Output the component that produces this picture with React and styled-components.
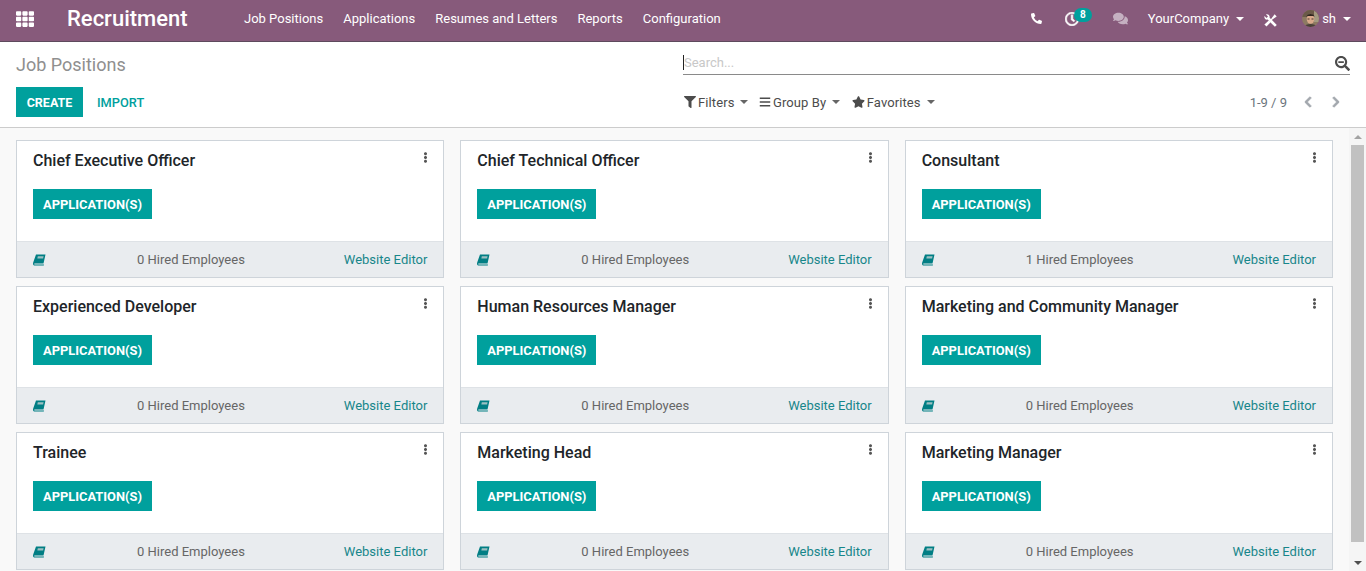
import React from 'react';
import styled, { createGlobalStyle } from 'styled-components';
import { FaTh, FaPhoneAlt, FaRegClock, FaComments, FaFilter, FaBars, FaStar, FaSearchMinus, FaChevronLeft, FaChevronRight, FaEllipsisV } from 'react-icons/fa';

const GlobalStyle = createGlobalStyle`
  html, body {
    margin: 0;
    height: 100%;
    overflow: hidden;
    font-family: Roboto, "Noto Sans", sans-serif;
    font-size: 13px;
    color: #212529;
  }
`;

const Page = styled.div`
  display: flex;
  flex-direction: column;
  height: 571px;
  background: #f9f9f9;
`;

const Navbar = styled.header`
  display: flex;
  align-items: center;
  height: 41px;
  box-sizing: content-box;
  flex-shrink: 0;
  background: #875a7b;
  border-bottom: 1px solid #5e4a5d;
  color: #fff;
`;

const NavInner = styled.div`
  display: flex;
  align-items: center;
  flex: 1;
  height: 37px;
  margin-bottom: 4px;
`;

const AppsIcon = styled(FaTh)`
  width: 18px;
  height: 18px;
  margin-left: 16px;
`;

const Brand = styled.span`
  margin-left: 33px;
  width: 177px;
  font-size: 22px;
  font-weight: 500;
`;

const NavLink = styled.a`
  margin-right: 20px;
  font-size: 13px;
  color: #fff;
`;

const NavRight = styled.div`
  display: flex;
  align-items: center;
  margin-left: auto;
  height: 100%;
`;

const NavIcon = styled.span`
  position: relative;
  display: flex;
  align-items: center;
  margin-left: ${(p) => p.$gap}px;
  font-size: ${(p) => p.$size || 14}px;
  color: ${(p) => p.$muted ? '#c5b0c1' : '#fff'};
`;

const ClockIcon = styled(FaRegClock)`
  stroke: currentColor;
  stroke-width: 24;
`;

const Badge = styled.span`
  position: absolute;
  top: -4px;
  left: 9px;
  width: 18px;
  height: 14px;
  line-height: 14px;
  border-radius: 7px;
  background: #00a09d;
  color: #fff;
  font-size: 10px;
  font-weight: 700;
  text-align: center;
`;

const Caret = styled.span`
  display: inline-block;
  margin-left: ${(p) => p.$gap || 7}px;
  border-top: 4px solid ${(p) => p.$color || '#fff'};
  border-left: 4px solid transparent;
  border-right: 4px solid transparent;
`;

const CompanyMenu = styled.span`
  display: flex;
  align-items: center;
  margin-left: 20px;
  font-size: 13px;
`;

const UserMenu = styled.span`
  display: flex;
  align-items: center;
  margin-left: 25px;
  margin-right: 15px;
  font-size: 13px;
`;

const Avatar = styled.svg`
  width: 17px;
  height: 17px;
  margin-right: 3px;
  border-radius: 50%;
`;

const ToolsGlyph = styled.svg`
  width: 13px;
  height: 13px;
  margin-top: 4px;
`;

const ControlPanel = styled.section`
  display: grid;
  grid-template-columns: 667px 1fr;
  grid-template-rows: 45px 40px;
  flex-shrink: 0;
  height: 86px;
  padding-left: 16px;
  padding-right: 16px;
  box-sizing: border-box;
  width: 100%;
  background: #fff;
  border-bottom: 1px solid #ccc;
`;

const Breadcrumb = styled.h1`
  margin: 0 0 1px;
  align-self: center;
  font-size: 18px;
  font-weight: 400;
  color: #8f8f8f;
`;

const SearchBar = styled.div`
  display: flex;
  align-items: center;
  justify-content: space-between;
  align-self: end;
  height: 24px;
  margin-bottom: 12px;
  border-bottom: 1px solid #8a8a8a;
`;

const SearchInput = styled.span`
  padding-left: 0;
  border-left: 1px solid #222;
  line-height: 15px;
  font-size: 13px;
  color: #c8c8c8;
`;

const SearchIcon = styled(FaSearchMinus)`
  width: 15px;
  height: 15px;
  margin-top: 3px;
  color: #4c4c4c;
`;

const Actions = styled.div`
  display: flex;
  align-items: flex-start;
`;

const CreateButton = styled.button`
  height: 30px;
  width: 67px;
  padding: 1px 0 0;
  border: none;
  background: #00a09d;
  color: #fff;
  font-family: inherit;
  font-size: 12.5px;
  font-weight: 700;
`;

const ImportButton = styled.button`
  height: 30px;
  margin-left: 14px;
  padding: 1px 0 0;
  border: none;
  background: none;
  color: #00a09d;
  font-family: inherit;
  font-size: 12.8px;
  font-weight: 500;
`;

const Tools = styled.div`
  display: flex;
  align-items: flex-start;
  justify-content: space-between;
`;

const Filters = styled.div`
  display: flex;
  align-items: center;
  height: 30px;
  padding-left: 1px;
`;

const FilterItem = styled.span`
  display: flex;
  align-items: center;
  margin-right: 10.5px;
  font-size: 13px;
  letter-spacing: 0.1px;
  color: #4c4c4c;
  svg {
    width: ${(p) => p.$iconWidth || 12}px;
    height: 12px;
    margin-right: 2px;
    margin-left: ${(p) => p.$iconShift || 0}px;
  }
`;

const Pager = styled.div`
  display: flex;
  align-items: center;
  height: 30px;
  padding-right: 9px;
  font-size: 13px;
  color: #6c757d;
  svg {
    width: 10px;
    height: 12px;
    color: #a2a7ad;
    stroke: currentColor;
    stroke-width: 36;
  }
`;

const PagerPrev = styled.span`
  display: flex;
  margin-left: 16px;
  margin-right: 18px;
`;

const Body = styled.div`
  display: flex;
  flex: 1;
  min-height: 0;
`;

const Board = styled.main`
  flex: 1;
  display: grid;
  grid-template-columns: repeat(3, 1fr);
  grid-auto-rows: 138px;
  gap: 8px 16px;
  padding: 12px 16px 0;
  overflow: hidden;
`;

const Card = styled.article`
  display: flex;
  flex-direction: column;
  box-sizing: border-box;
  background: #fff;
  border: 1px solid #ced4da;
`;

const CardBody = styled.div`
  position: relative;
  flex: 1;
  padding: 10px 16px 0;
`;

const CardTitle = styled.h2`
  margin: 0;
  font-size: 16px;
  line-height: 19px;
  font-weight: 500;
  color: #212529;
`;

const MenuDots = styled(FaEllipsisV)`
  position: absolute;
  top: 11px;
  right: 13px;
  width: 9px;
  height: 11px;
  color: #555;
`;

const AppButton = styled.button`
  display: block;
  margin-top: 19px;
  width: 119px;
  height: 30px;
  padding: 0;
  border: none;
  background: #00a09d;
  color: #fff;
  font-family: inherit;
  font-size: 12.9px;
  font-weight: 700;
`;

const CardFooter = styled.footer`
  display: grid;
  grid-template-columns: 104px 1fr auto;
  align-items: center;
  box-sizing: border-box;
  height: 36px;
  padding: 0 16px;
  background: #e9ecef;
  border-top: 1px solid #dee2e6;
  font-size: 13px;
  color: #666;
`;

const BookIcon = styled.svg`
  width: 13px;
  height: 12px;
  color: #017e84;
`;

const EditorLink = styled.a`
  justify-self: end;
  color: #17868a;
`;

const Scrollbar = styled.aside`
  display: flex;
  flex-direction: column;
  align-items: center;
  width: 17px;
  flex-shrink: 0;
  background: #f5f5f5;
`;

const ScrollArrow = styled.span`
  margin: ${(p) => p.$margin};
  border-left: 4px solid transparent;
  border-right: 4px solid transparent;
  ${(p) => p.$down ? 'border-top: 4px solid #505050;' : 'border-bottom: 4px solid #a3a3a3;'}
`;

const ScrollThumb = styled.span`
  width: 13px;
  height: 397px;
  background: #c1c1c1;
`;

const NAV_LINKS = ['Job Positions', 'Applications', 'Resumes and Letters', 'Reports', 'Configuration'];

const JOBS = [
  { title: 'Chief Executive Officer', hired: 0 },
  { title: 'Chief Technical Officer', hired: 0 },
  { title: 'Consultant', hired: 1 },
  { title: 'Experienced Developer', hired: 0 },
  { title: 'Human Resources Manager', hired: 0 },
  { title: 'Marketing and Community Manager', hired: 0 },
  { title: 'Trainee', hired: 0 },
  { title: 'Marketing Head', hired: 0 },
  { title: 'Marketing Manager', hired: 0 },
];

const ToolsIcon = () => (
  <ToolsGlyph viewBox="0 0 13 13" fill="#fff">
    <path d="M10.9 12.8 L12.8 10.9 L5.6 3.7 C6.1 1.6 4.2 -.2 2 .5 L4 2.5 L2.5 4 L.5 2 C-.2 4.2 1.6 6.1 3.7 5.6 Z" />
    <path d="M10.6 .3 L12.7 2.4 L9.4 4.8 L8.2 3.6 Z" />
    <path d="M8.9 3 L9.9 4 L6 8 L5 7 Z" />
    <path d="M4.8 6.4 L6.6 8.2 L2.5 12.6 L.4 10.5 Z" />
  </ToolsGlyph>
);

const UserAvatar = () => (
  <Avatar viewBox="0 0 17 17">
    <rect width="17" height="17" fill="#8d7a62" />
    <path d="M0 0h17v7H0z" fill="#6b5a48" />
    <path d="M12 0h5v12h-5z" fill="#a39a80" />
    <ellipse cx="8.5" cy="9" rx="3.8" ry="4.8" fill="#d9a98a" />
    <path d="M4.5 7c0-4 8-4 8 0l-1-1H5.5z" fill="#2e2620" />
    <path d="M5.5 8.5h2v1h-2zM9.5 8.5h2v1h-2z" fill="#4a3a30" />
    <path d="M2 17c1-4 12-4 13 0z" fill="#4a4038" />
  </Avatar>
);

const App = () => {
  return (
    <Page>
      <GlobalStyle />
      <Navbar>
        <NavInner>
          <AppsIcon />
          <Brand>Recruitment</Brand>
          {NAV_LINKS.map((link) => <NavLink key={link}>{link}</NavLink>)}
          <NavRight>
            <NavIcon $gap={0} $size={11}><FaPhoneAlt /></NavIcon>
            <NavIcon $gap={23} $size={14}>
              <ClockIcon />
              <Badge>8</Badge>
            </NavIcon>
            <NavIcon $gap={34} $size={15} $muted><FaComments /></NavIcon>
            <CompanyMenu>YourCompany<Caret /></CompanyMenu>
            <NavIcon $gap={20}><ToolsIcon /></NavIcon>
            <UserMenu><UserAvatar />sh<Caret /></UserMenu>
          </NavRight>
        </NavInner>
      </Navbar>

      <ControlPanel>
        <Breadcrumb>Job Positions</Breadcrumb>
        <SearchBar>
          <SearchInput>Search...</SearchInput>
          <SearchIcon />
        </SearchBar>
        <Actions>
          <CreateButton>CREATE</CreateButton>
          <ImportButton>IMPORT</ImportButton>
        </Actions>
        <Tools>
          <Filters>
            <FilterItem><FaFilter />Filters<Caret $gap={6} $color="#666" /></FilterItem>
            <FilterItem><FaBars />Group By<Caret $gap={6} $color="#666" /></FilterItem>
            <FilterItem $iconWidth={13} $iconShift={1}><FaStar />Favorites<Caret $gap={6} $color="#666" /></FilterItem>
          </Filters>
          <Pager>
            1-9 / 9
            <PagerPrev><FaChevronLeft /></PagerPrev>
            <FaChevronRight />
          </Pager>
        </Tools>
      </ControlPanel>

      <Body>
        <Board>
          {JOBS.map((job) => (
            <Card key={job.title}>
              <CardBody>
                <CardTitle>{job.title}</CardTitle>
                <MenuDots />
                <AppButton>APPLICATION(S)</AppButton>
              </CardBody>
              <CardFooter>
                <BookIcon viewBox="0 0 13 12">
                  <path fill="currentColor" d="M3 0.5h9.5l-2 9H1.6c-.5 0-.7.9 0 .9h9.4l-.2 1H1.2C0 11.4-.2 10 .2 8.6z" />
                  <path fill="#9cc0c2" d="M4.8 2.2h5.8l-.5 2.2H4.3z" />
                </BookIcon>
                <span>{job.hired} Hired Employees</span>
                <EditorLink>Website Editor</EditorLink>
              </CardFooter>
            </Card>
          ))}
        </Board>
        <Scrollbar>
          <ScrollArrow $margin="7px 0 6px" />
          <ScrollThumb />
          <ScrollArrow $down $margin="19px 0 0" />
        </Scrollbar>
      </Body>
    </Page>
  );
};

export default App;
